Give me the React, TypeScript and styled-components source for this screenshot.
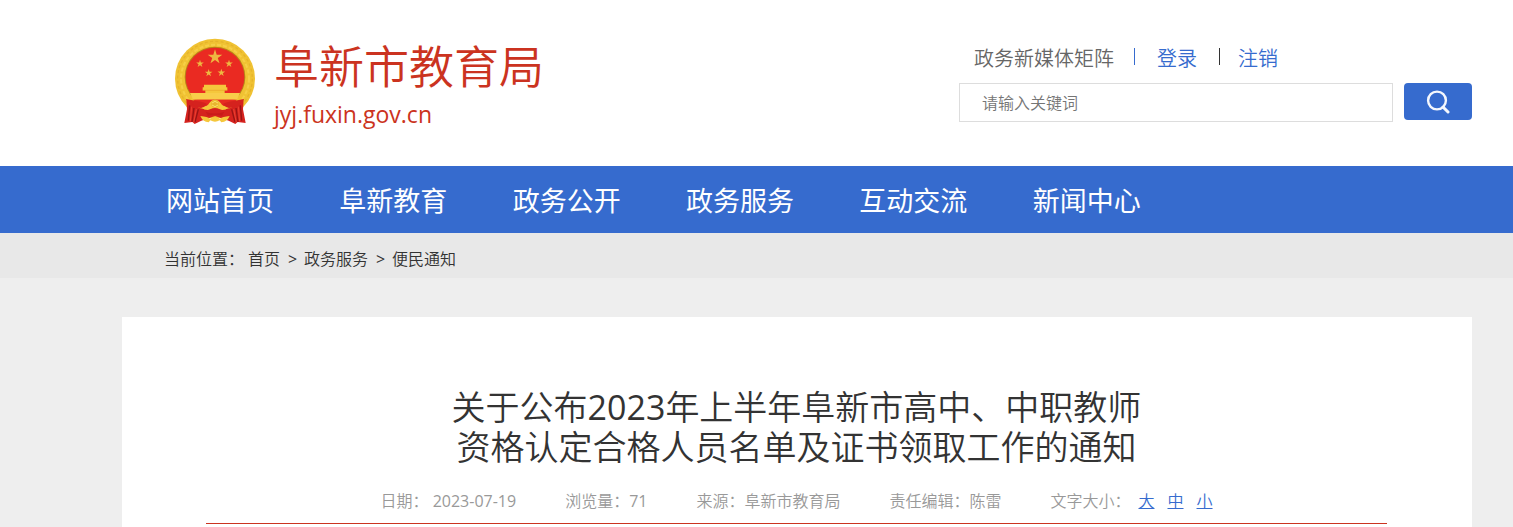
import React from "react";
import styled, { createGlobalStyle } from "styled-components";

const BLUE = "#366bce";
const RED = "#cb3320";

const GlobalStyle = createGlobalStyle`
  *, *::before, *::after { box-sizing: border-box; }
  body {
    margin: 0;
    background: #eee;
    color: #333;
    font-family: "Open Sans", "Noto Sans CJK SC", sans-serif;
    font-size: 16px;
    line-height: 24px;
  }
  h1, p, ul, ol { margin: 0; padding: 0; }
  ul, ol { list-style: none; }
  a { color: inherit; text-decoration: none; }
`;

const Page = styled.div`
  min-height: 100vh;
  display: flex;
  flex-direction: column;
`;

const gutters = `
  padding-left: 122px;
  padding-right: 41px;
`;

const Header = styled.header`
  ${gutters}
  height: 166px;
  display: flex;
  justify-content: space-between;
  align-items: flex-start;
  background: #fff;
`;

const Brand = styled.a`
  display: flex;
  gap: 18px;
  padding: 38px 0 0 52px;
  color: ${RED};
  white-space: nowrap;
`;

const BrandText = styled.span`
  display: flex;
  flex-direction: column;
`;

const BrandName = styled.span`
  font-size: 45px;
  line-height: 58px;
  font-weight: 350;
`;

const BrandUrl = styled.span`
  font-size: 23px;
  line-height: 36px;
`;

const Tools = styled.div`
  width: 513px;
  padding-top: 46px;
`;

const UserLinks = styled.div`
  display: flex;
  align-items: flex-start;
  height: 26px;
  padding-left: 15px;
  margin-bottom: 11px;
  font-size: 20px;
  line-height: 26px;
  font-weight: 350;
  color: #666;
  white-space: nowrap;
`;

const Divider = styled.span<{ $color: string; $before: number; $after: number }>`
  width: 1px;
  height: 17px;
  margin: 2px ${(p) => p.$after}px 0 ${(p) => p.$before}px;
  background: ${(p) => p.$color};
`;

const UserLink = styled.a`
  color: ${BLUE};
`;

const SearchForm = styled.form`
  display: flex;
  gap: 11px;
  align-items: flex-start;
`;

const SearchInput = styled.input`
  flex: 1;
  min-width: 0;
  height: 39px;
  padding: 0 22px;
  border: 1px solid #ddd;
  background: #fff;
  font: inherit;
  font-weight: 350;
  color: #333;
  outline: none;
  &::placeholder { color: #757575; opacity: 1; }
`;

const SearchButton = styled.button`
  width: 68px;
  height: 37px;
  padding: 0;
  border: 0;
  border-radius: 4px;
  display: flex;
  align-items: center;
  justify-content: center;
  background: ${BLUE};
  cursor: pointer;
`;

const Nav = styled.nav`
  ${gutters}
  background: ${BLUE};
`;

const NavList = styled.ul`
  display: grid;
  grid-template-columns: repeat(6, 1fr);
  max-width: 1084px;
  padding-left: 44px;
`;

const NavLink = styled.a`
  display: block;
  padding-top: 2px;
  font-size: 27px;
  line-height: 65px;
  color: #fff;
  white-space: nowrap;
`;

const Crumbs = styled.nav`
  ${gutters}
  background: #e8e8e8;
`;

const CrumbList = styled.ol`
  display: flex;
  gap: 8px;
  height: 45px;
  padding: 4px 0 0 42px;
  line-height: 45px;
  font-weight: 350;
  color: #333;
  white-space: nowrap;
`;

const CrumbLabel = styled.li`
  width: 76px;
`;

const CrumbArrow = styled.li`
  width: 8px;
  font-weight: 400;
`;

const Main = styled.main`
  ${gutters}
  flex: 1;
  display: flex;
  padding-top: 39px;
`;

const Article = styled.article`
  flex: 1;
  padding: 70px 85px 0 84px;
  background: #fff;
`;

const Title = styled.h1`
  font-size: 34px;
  line-height: 40px;
  font-weight: 350;
  text-align: center;
  color: #333;
`;

const Latin = styled.span`
  font-weight: 400;
`;

const Meta = styled.div`
  display: flex;
  justify-content: center;
  gap: 49px;
  height: 57px;
  padding-top: 22px;
  border-bottom: 1px solid ${RED};
  font-weight: 350;
  color: #999;
  white-space: nowrap;
`;

const SizeLinks = styled.span`
  display: inline-flex;
  gap: 13px;
  margin-left: 8px;
`;

const SizeLink = styled.a`
  color: ${BLUE};
  text-decoration: underline;
`;

function star(cx: number, cy: number, r: number) {
  return Array.from({ length: 10 }, (_, i) => {
    const radius = i % 2 ? r * 0.38 : r;
    const angle = (Math.PI / 5) * i - Math.PI / 2;
    return `${(cx + radius * Math.cos(angle)).toFixed(1)},${(cy + radius * Math.sin(angle)).toFixed(1)}`;
  }).join(" ");
}

const GOLD = "#f5c73c";

function Emblem() {
  return (
    <svg width="82" height="88" viewBox="26 24 246 264" aria-hidden="true">
      <circle cx="149" cy="146" r="120" fill="#f0c233" />
      <circle cx="149" cy="146" r="112" fill="none" stroke="#e6b42b" strokeWidth="4" strokeDasharray="9 7" />
      <circle cx="149" cy="146" r="102" fill="none" stroke="#f6cf47" strokeWidth="6" strokeDasharray="12 6" />
      <circle cx="149" cy="141" r="91" fill="#b98218" />
      <circle cx="149" cy="141" r="88" fill="#ea2a22" />
      <g fill="#eeb941">
        <polygon points={star(149, 81, 23)} />
        <polygon points={star(104, 101, 12)} />
        <polygon points={star(191, 101, 12)} />
        <polygon points={star(130, 129, 12)} />
        <polygon points={star(168, 128, 12)} />
      </g>
      <path d="M116 164h66v8h4v9h-74v-9h4zM120 181h58v9h-58z" fill={GOLD} />
      <path d="M112 181h74" stroke="#e8a52a" strokeWidth="2" />
      <path d="M74 189h150l-9 20H83z" fill="#f8cd4a" />
      <path d="M83 209H215Q195 229 174 229H124Q103 229 83 209z" fill="#e62b22" />
      <path d="M62 207Q76 234 113 235L125 222Q116 216 93 213zM236 207Q222 234 185 235L173 222Q182 216 205 213z" fill="#d5221e" />
      <path d="M63 207Q82 230 118 238L149 234L180 238Q216 230 235 207L233 238L241 279L217 276L210 282L190 272L149 258L108 272L88 282L81 276L57 279L65 238z" fill="#d5221e" />
      <path d="M73 226L69 272M86 234L80 276M99 238L89 276M225 226L229 272M212 234L218 276M199 238L209 276" fill="none" stroke="#981414" strokeWidth="4" />
      <path d="M79 230L75 274M93 237L85 278M219 230L223 274M205 237L213 278" fill="none" stroke="#f4513b" strokeWidth="2" />
      <path d="M108 233Q126 230 132 219Q139 209 149 209T166 219Q172 230 190 233Q174 244 164 238Q149 227 134 238Q124 244 108 233z" fill={GOLD} />
      <circle cx="149" cy="222" r="11" fill="#e8b52e" />
      <path d="M140 219l9-5 9 5M140 225l9 5 9-5" fill="none" stroke="#fae16b" strokeWidth="3" />
      <path d="M105 258Q127 260 134 266Q149 256 164 266Q171 260 193 258Q186 275 168 277L163 271Q149 279 135 271L130 277Q112 275 105 258z" fill={GOLD} />
      <path d="M121 245Q149 256 177 245L170 258Q149 250 128 258z" fill="#c91b1a" />
    </svg>
  );
}

function SearchIcon() {
  return (
    <svg width="24" height="24" viewBox="0 0 24 24" fill="none" stroke="#f4f7fd" aria-hidden="true">
      <circle cx="11" cy="10.5" r="8.9" strokeWidth="2.4" />
      <path d="M17 17l5 5" strokeWidth="3" strokeLinecap="round" />
    </svg>
  );
}

const NAV_ITEMS = ["网站首页", "阜新教育", "政务公开", "政务服务", "互动交流", "新闻中心"];

export default function App() {
  return (
    <Page>
      <GlobalStyle />
      <Header>
        <Brand href="#">
          <Emblem />
          <BrandText>
            <BrandName>阜新市教育局</BrandName>
            <BrandUrl>jyj.fuxin.gov.cn</BrandUrl>
          </BrandText>
        </Brand>
        <Tools>
          <UserLinks>
            <a href="#">政务新媒体矩阵</a>
            <Divider $color={BLUE} $before={20} $after={22} />
            <UserLink href="#">登录</UserLink>
            <Divider $color="#333" $before={22} $after={18} />
            <UserLink href="#">注销</UserLink>
          </UserLinks>
          <SearchForm role="search" onSubmit={(e: React.FormEvent) => e.preventDefault()}>
            <SearchInput type="text" placeholder="请输入关键词" aria-label="请输入关键词" />
            <SearchButton type="submit" aria-label="搜索">
              <SearchIcon />
            </SearchButton>
          </SearchForm>
        </Tools>
      </Header>
      <Nav>
        <NavList>
          {NAV_ITEMS.map((item) => (
            <li key={item}>
              <NavLink href="#">{item}</NavLink>
            </li>
          ))}
        </NavList>
      </Nav>
      <Crumbs>
        <CrumbList>
          <CrumbLabel>当前位置：</CrumbLabel>
          <li><a href="#">首页</a></li>
          <CrumbArrow aria-hidden="true">&gt;</CrumbArrow>
          <li><a href="#">政务服务</a></li>
          <CrumbArrow aria-hidden="true">&gt;</CrumbArrow>
          <li><a href="#">便民通知</a></li>
        </CrumbList>
      </Crumbs>
      <Main>
        <Article>
          <Title>
            关于公布<Latin>2023</Latin>年上半年阜新市高中、中职教师
            <br />
            资格认定合格人员名单及证书领取工作的通知
          </Title>
          <Meta>
            <span>日期： <Latin>2023-07-19</Latin></span>
            <span>浏览量：<Latin>71</Latin></span>
            <span>来源：阜新市教育局</span>
            <span>责任编辑：陈雷</span>
            <span>
              文字大小：
              <SizeLinks>
                <SizeLink href="#">大</SizeLink>
                <SizeLink href="#">中</SizeLink>
                <SizeLink href="#">小</SizeLink>
              </SizeLinks>
            </span>
          </Meta>
        </Article>
      </Main>
    </Page>
  );
}
